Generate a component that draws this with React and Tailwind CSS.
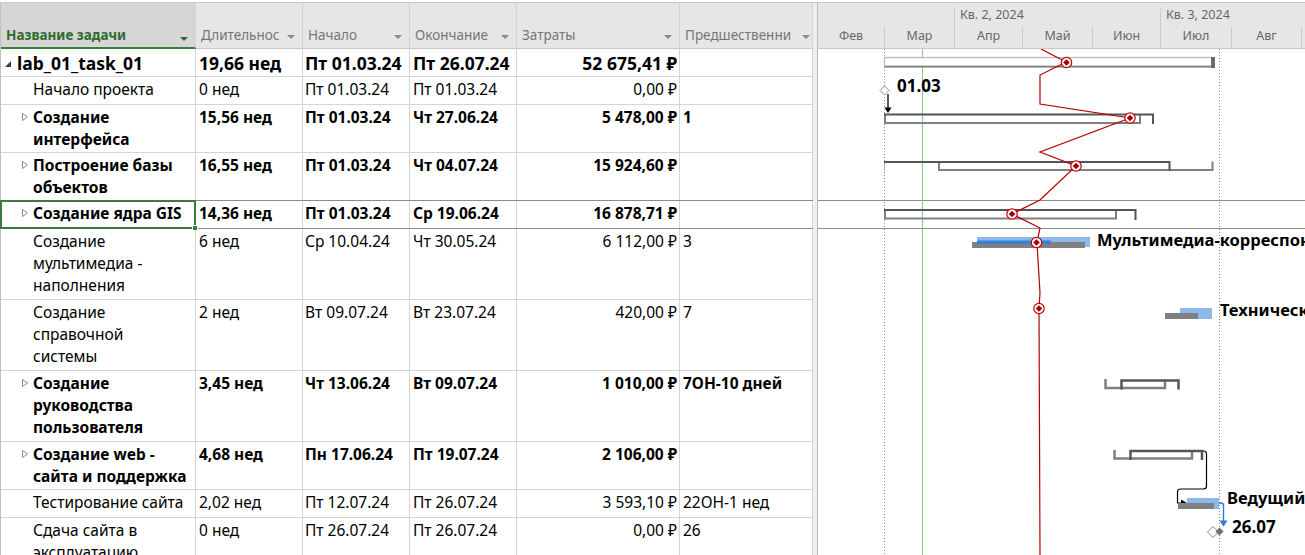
import React from 'react';

const rows = [
  { name: ['lab_01_task_01'], dur: '19,66 нед', start: 'Пт 01.03.24', end: 'Пт 26.07.24', cost: '52 675,41 ₽', pred: '', bold: true, big: true, h: 28, level: 0 },
  { name: ['Начало проекта'], dur: '0 нед', start: 'Пт 01.03.24', end: 'Пт 01.03.24', cost: '0,00 ₽', pred: '', h: 28, level: 1 },
  { name: ['Создание', 'интерфейса'], dur: '15,56 нед', start: 'Пт 01.03.24', end: 'Чт 27.06.24', cost: '5 478,00 ₽', pred: '1', bold: true, sum: true, h: 48, level: 1 },
  { name: ['Построение базы', 'объектов'], dur: '16,55 нед', start: 'Пт 01.03.24', end: 'Чт 04.07.24', cost: '15 924,60 ₽', pred: '', bold: true, sum: true, h: 48, level: 1, dark: true },
  { name: ['Создание ядра GIS'], dur: '14,36 нед', start: 'Пт 01.03.24', end: 'Ср 19.06.24', cost: '16 878,71 ₽', pred: '', bold: true, sum: true, h: 28, level: 1, dark: true, selected: true },
  { name: ['Создание', 'мультимедиа -', 'наполнения'], dur: '6 нед', start: 'Ср 10.04.24', end: 'Чт 30.05.24', cost: '6 112,00 ₽', pred: '3', h: 71, level: 1 },
  { name: ['Создание', 'справочной', 'системы'], dur: '2 нед', start: 'Вт 09.07.24', end: 'Вт 23.07.24', cost: '420,00 ₽', pred: '7', h: 71, level: 1 },
  { name: ['Создание', 'руководства', 'пользователя'], dur: '3,45 нед', start: 'Чт 13.06.24', end: 'Вт 09.07.24', cost: '1 010,00 ₽', pred: '7ОН-10 дней', bold: true, sum: true, h: 71, level: 1 },
  { name: ['Создание web -', 'сайта и поддержка'], dur: '4,68 нед', start: 'Пн 17.06.24', end: 'Пт 19.07.24', cost: '2 106,00 ₽', pred: '', bold: true, sum: true, h: 48, level: 1 },
  { name: ['Тестирование сайта'], dur: '2,02 нед', start: 'Пт 12.07.24', end: 'Пт 26.07.24', cost: '3 593,10 ₽', pred: '22ОН-1 нед', h: 28, level: 1 },
  { name: ['Сдача сайта в', 'эксплуатацию'], dur: '0 нед', start: 'Пт 26.07.24', end: 'Пт 26.07.24', cost: '0,00 ₽', pred: '26', h: 48, level: 1 },
];

const H = { 28: 'h-[28px]', 48: 'h-[48px]', 71: 'h-[71px]' };

function Tri({ color }) {
  return (
    <svg width="8" height="4" viewBox="0 0 8 4" className="shrink-0">
      <path d="M0 0H8L4 4Z" fill={color} />
    </svg>
  );
}

function HCell({ w, label, name, pr }) {
  return (
    <div
      className={`${w} shrink-0 h-full flex items-end justify-between border-r border-[#d3d3d3] pl-[5px] ${pr} ${
        name ? 'bg-[#d6d6d6] border-b-2 border-b-[#3b7b3b] pb-[2px]' : 'bg-[#e6e6e6] border-b border-b-[#c6c6c6] pb-[3px]'
      }`}
    >
      <span
        className={`text-[13.5px] leading-[20px] whitespace-nowrap overflow-hidden ${
          name ? 'font-bold text-[#2f6a2f]' : 'text-[#767676]'
        }`}
      >
        {label}
      </span>
      <span className={name ? 'mb-[4px] ml-[2px]' : 'mb-[6px] ml-[2px]'}>
        <Tri color={name ? '#2f6a2f' : '#8a8a8a'} />
      </span>
    </div>
  );
}

function Row({ r }) {
  const txt = r.big ? 'text-[17.5px] leading-[26px]' : 'text-[15.5px] leading-[22px]';
  const wt = r.bold ? 'font-bold' : 'font-normal';
  return (
    <div className={`flex shrink-0 ${H[r.h]} border-b ${r.dark ? 'border-b-[#8c8c8c]' : 'border-b-[#d5d5d5]'} ${txt} ${wt}`}>
      <div className="w-[195px] shrink-0 border-r border-[#d5d5d5] relative flex pt-[1px]">
        {r.level === 0 ? (
          <div className="w-[16px] shrink-0 h-[26px] flex items-center pl-[4px] pt-[1px]">
            <svg width="6" height="6" viewBox="0 0 6 6">
              <path d="M6 0V6H0Z" fill="#3c3c3c" />
            </svg>
          </div>
        ) : (
          <div className="w-[32px] shrink-0 h-[22px] flex items-center pl-[21px]">
            {r.sum && (
              <svg width="6" height="8" viewBox="0 0 6 8">
                <path d="M0.5 0.5L5.5 4L0.5 7.5Z" fill="none" stroke="#8c8c8c" />
              </svg>
            )}
          </div>
        )}
        <div className="flex flex-col min-w-0">
          {r.name.map((l, i) => (
            <span key={i} className="whitespace-nowrap">{l}</span>
          ))}
        </div>
        {r.selected && (
          <div className="absolute left-[-1px] top-[-1px] right-[-1px] bottom-[-1px] border-2 border-[#3b7b3b] z-10">
            <div className="absolute right-[-4px] bottom-[-4px] w-[6px] h-[6px] bg-[#3b7b3b] border border-white" />
          </div>
        )}
      </div>
      <div className="w-[107px] shrink-0 border-r border-[#d5d5d5] pl-[3px] pt-[1px] whitespace-nowrap">{r.dur}</div>
      <div className="w-[107px] shrink-0 border-r border-[#d5d5d5] pl-[2px] pt-[1px] whitespace-nowrap">{r.start}</div>
      <div className="w-[107px] shrink-0 border-r border-[#d5d5d5] pl-[3px] pt-[1px] whitespace-nowrap">{r.end}</div>
      <div className="w-[163px] shrink-0 border-r border-[#d5d5d5] pr-[2px] pt-[1px] text-right whitespace-nowrap">{r.cost}</div>
      <div className="w-[133px] shrink-0 border-r border-[#d5d5d5] pl-[3px] pt-[1px] whitespace-nowrap overflow-hidden">{r.pred}</div>
    </div>
  );
}

function Table() {
  return (
    <div className="w-[813px] shrink-0 flex flex-col pt-[2px]">
      <div className="flex shrink-0 h-[47px] border-t border-[#c9c9c9] border-l border-l-[#c0c0c0]">
        <HCell w="w-[195px]" pr="pr-[7px]" label="Название задачи" name />
        <HCell w="w-[107px]" pr="pr-[7px]" label="Длительнос" />
        <HCell w="w-[107px]" pr="pr-[7px]" label="Начало" />
        <HCell w="w-[107px]" pr="pr-[7px]" label="Окончание" />
        <HCell w="w-[163px]" pr="pr-[7px]" label="Затраты" />
        <HCell w="w-[133px]" pr="pr-[2px]" label="Предшественни" />
      </div>
      <div className="flex flex-col border-l border-[#c0c0c0] flex-1 text-black">
        {rows.map((r, i) => (
          <Row key={i} r={r} />
        ))}
      </div>
    </div>
  );
}

function Marker({ x, y }) {
  return (
    <g>
      <circle cx={x} cy={y} r="5.2" fill="#fff" stroke="#c00000" strokeWidth="1.2" />
      <path d={`M${x} ${y - 3.3}L${x + 3.3} ${y}L${x} ${y + 3.3}L${x - 3.3} ${y}Z`} fill="#a80000" />
    </g>
  );
}

const lbl = { fontFamily: 'Noto Sans, sans-serif', fontWeight: 700, fontSize: 17, fill: '#000' };
const lblS = { fontFamily: 'Noto Sans, sans-serif', fontWeight: 700, fontSize: 16.5, fill: '#000' };

function Chart() {
  const months = [
    ['Фев', 'w-[66px]', ''],
    ['Мар', 'w-[70px]', 'border-l'],
    ['Апр', 'w-[68px]', 'border-l'],
    ['Май', 'w-[70px]', 'border-l'],
    ['Июн', 'w-[68px]', 'border-l'],
    ['Июл', 'w-[71px]', 'border-l'],
    ['Авг', 'w-[70px]', 'border-l'],
  ];
  return (
    <div className="flex-1 min-w-0 flex flex-col pt-[2px]">
      <div className="h-[47px] shrink-0 border-t border-b border-[#c9c9c9] bg-[#e6e6e6] flex flex-col overflow-hidden text-[12.5px] text-[#666666]">
        <div className="h-[24px] flex">
          <div className="w-[136px] shrink-0" />
          <div className="w-[206px] shrink-0 flex flex-col">
            <div className="h-[6px]" />
            <div className="flex-1 border-l border-[#cbcbcb] pl-[5px] leading-[16px] whitespace-nowrap -mt-[2px]">Кв. 2, 2024</div>
          </div>
          <div className="flex-1 flex flex-col">
            <div className="h-[6px]" />
            <div className="flex-1 border-l border-[#cbcbcb] pl-[5px] leading-[16px] whitespace-nowrap -mt-[2px]">Кв. 3, 2024</div>
          </div>
        </div>
        <div className="flex-1 flex">
          {months.map(([m, w, b]) => (
            <div key={m} className={`${w} shrink-0 ${b} border-[#cbcbcb] text-center leading-[16px] pt-[1px]`}>{m}</div>
          ))}
          <div className="flex-1 border-l border-[#cbcbcb]" />
        </div>
      </div>
      <div className="relative flex-1 overflow-hidden bg-white">
        <svg width="487" height="506" viewBox="818 49 487 506" className="absolute left-0 top-0">
          <line x1="818" y1="200.5" x2="1305" y2="200.5" stroke="#8c8c8c" />
          <line x1="818" y1="228.5" x2="1305" y2="228.5" stroke="#8c8c8c" />
          <line x1="884.5" y1="49" x2="884.5" y2="555" stroke="#8a8a8a" strokeDasharray="1 2" />
          <line x1="1219.5" y1="49" x2="1219.5" y2="555" stroke="#8a8a8a" strokeDasharray="1 2" />
          <line x1="922.5" y1="49" x2="922.5" y2="555" stroke="#86c886" />

          {/* row 1 project summary */}
          <rect x="884.5" y="57.5" width="328" height="9" fill="#fff" stroke="#bababa" strokeWidth="1.3" />
          <line x1="885" y1="66.7" x2="1212" y2="66.7" stroke="#7b7b7b" strokeWidth="1.8" />
          <rect x="1211" y="57" width="4" height="11" fill="#6a6a6a" />

          {/* row 2 milestone */}
          <path d="M884.5 86L889 90.5L884.5 95L880 90.5Z" fill="#fff" stroke="#8a8a8a" />
          <line x1="888" y1="94" x2="888" y2="108" stroke="#000" strokeWidth="1.3" />
          <path d="M884.5 107.5H891.5L888 113Z" fill="#000" />
          <text x="897" y="91.5" style={lbl}>01.03</text>

          {/* row 3 */}
          <line x1="884.5" y1="113" x2="884.5" y2="124" stroke="#aaaaaa" />
          <path d="M885 114V123H1140V115" fill="none" stroke="#808080" strokeWidth="2" />
          <path d="M884 114.5H1153V124" fill="none" stroke="#555555" strokeWidth="2" />

          {/* row 4 */}
          <line x1="884.5" y1="161" x2="884.5" y2="171" stroke="#aaaaaa" />
          <path d="M939 162V170H1212.5V161.5" fill="none" stroke="#808080" strokeWidth="2" />
          <path d="M884 162H1169.5V171" fill="none" stroke="#555555" strokeWidth="2" />

          {/* row 5 */}
          <line x1="884.5" y1="209" x2="884.5" y2="220" stroke="#aaaaaa" />
          <path d="M885 210V218.5H1116V210" fill="none" stroke="#808080" strokeWidth="2" />
          <path d="M884 210H1135.5V220" fill="none" stroke="#555555" strokeWidth="2" />

          {/* row 6 */}
          <rect x="977" y="237" width="113" height="10" fill="#8db8ea" />
          <rect x="972" y="242" width="113" height="6" fill="#808080" />
          <rect x="977" y="240.5" width="74" height="3.5" fill="#3a7fd6" />
          <text x="1097" y="245.5" style={lblS}>Мультимедиа-корреспон</text>

          {/* row 7 */}
          <rect x="1180" y="308" width="32" height="11" fill="#8db8ea" />
          <rect x="1165" y="313" width="33" height="6" fill="#808080" />
          <text x="1220" y="315.5" style={lblS}>Техническ</text>

          {/* row 8 */}
          <path d="M1105.5 379V388H1165V380.5" fill="none" stroke="#808080" strokeWidth="2.5" />
          <path d="M1121.5 389.5V380.5H1178.5V389.5" fill="none" stroke="#555555" strokeWidth="2.5" />

          {/* row 9 */}
          <path d="M1114.5 450V458.5H1192V451.5" fill="none" stroke="#808080" strokeWidth="2.5" />
          <path d="M1130.5 460V451H1202V460" fill="none" stroke="#555555" strokeWidth="2.5" />
          <path d="M1203 451H1204Q1206.5 451 1206.5 454V486Q1206.5 489 1203.5 489H1180.5Q1177.5 489 1177.5 492V503H1182" fill="none" stroke="#000" strokeWidth="1.2" />
          <path d="M1181 499.5L1187 503L1181 506.5Z" fill="#000" />

          {/* row 10 */}
          <rect x="1187" y="498" width="32" height="11" fill="#8db8ea" />
          <rect x="1178" y="503" width="36" height="6" fill="#808080" />
          <path d="M1219 503H1221Q1223.5 503 1223.5 505.5V521" fill="none" stroke="#2e7bd6" strokeWidth="1.4" />
          <path d="M1219.5 520.5H1227.5L1223.5 526.5Z" fill="#2e7bd6" />
          <text x="1227" y="504" style={lblS}>Ведущий</text>

          {/* row 11 */}
          <path d="M1213 526.5L1218.5 532L1213 537.5L1207.5 532Z" fill="#fff" stroke="#8a8a8a" />
          <path d="M1219.5 527.5L1223.5 531.5L1219.5 535.5L1215.5 531.5Z" fill="#707070" />
          <text x="1232" y="532.5" style={lbl}>26.07</text>

          {/* progress line */}
          <polyline
            points="1041,49 1066,62 1040,75 1040,104 1130,118 1040,152 1076,166 1040,200 1012,214 1040,228 1037,242 1038,260 1040,293 1039,308 1040,555"
            fill="none"
            stroke="#b40000"
            strokeWidth="1.2"
          />
          <Marker x={1066.5} y={62.5} />
          <Marker x={1130} y={118} />
          <Marker x={1076} y={166} />
          <Marker x={1012} y={214} />
          <Marker x={1036.5} y={242.5} />
          <Marker x={1039} y={308.5} />
        </svg>
      </div>
    </div>
  );
}

export default function App() {
  return (
    <div className="w-[1305px] h-[555px] overflow-hidden bg-white flex font-['Noto_Sans',sans-serif] text-black">
      <Table />
      <div className="w-[5px] shrink-0 flex flex-col pt-[2px]">
        <div className="flex-1 bg-[#efefef] border-t border-[#c9c9c9] border-r border-r-[#b8b8b8]" />
      </div>
      <Chart />
    </div>
  );
}
